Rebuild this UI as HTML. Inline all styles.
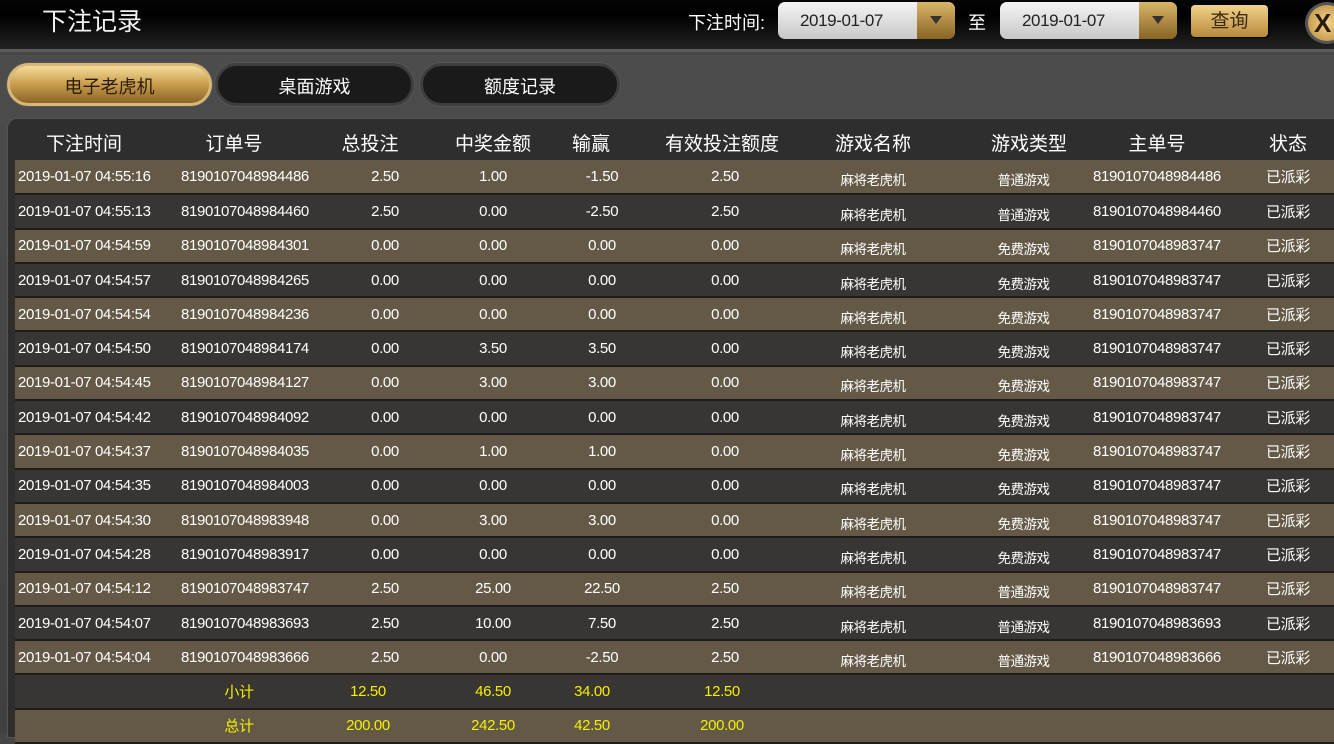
<!DOCTYPE html>
<html><head><meta charset="utf-8">
<style>
*{margin:0;padding:0;box-sizing:border-box}
body{width:1334px;height:733px;overflow:hidden;background:#464646;font-family:"Liberation Sans","Noto Sans CJK SC",sans-serif;color:#fff;position:relative}
.top{position:absolute;left:0;top:0;width:1334px;height:52px;background:linear-gradient(#050505,#000 30%,#222);border-bottom:3px solid #5a5a5a}
.title{position:absolute;left:42px;top:2px;font-size:25px;color:#f2f2f2}
.lbl{position:absolute;top:9px;font-size:18px}
.date{position:absolute;top:2px;width:177px;height:37px;border-radius:7px;background:linear-gradient(#f4f4f4,#c8c8c8);overflow:hidden;color:#222;font-size:17px;line-height:37px;padding-left:22px;letter-spacing:-0.4px}
.date i{position:absolute;right:0;top:0;width:38px;height:37px;background:linear-gradient(#d9b56a,#8a6424)}
.date i:after{content:"";position:absolute;left:13px;top:14px;border-left:6px solid transparent;border-right:6px solid transparent;border-top:8px solid #333}
.btn{position:absolute;left:1191px;top:5px;width:77px;height:32px;border-radius:4px;background:linear-gradient(#f2d38c,#b8893b);color:#3a2a10;font-size:19px;text-align:center;line-height:34px;box-shadow:1px 1px 1px #000}
.x{position:absolute;left:1305px;top:2px;width:44px;height:42px;border-radius:50%;background:radial-gradient(#f4d48c,#b8893b);border:3px solid #555;color:#2a1e0a;font-weight:bold;font-size:26px;line-height:36px;padding-left:6px}
.mid{position:absolute;left:0;top:55px;width:1334px;height:678px;background:linear-gradient(#4c4c4c,#404040)}
.tab{position:absolute;top:63px;height:43px;border-radius:22px;background:#1a1a1a;border:3px solid #3e3e3e;box-shadow:0 0 0 1px #555;text-align:center;line-height:42px;font-size:18px}
.tab.on{background:linear-gradient(#f5dc9a,#c89c4c 50%,#8a6428);color:#2a1c08;border-color:#d8b878}
.panel{position:absolute;left:7px;top:118px;width:1340px;height:620px;border-radius:10px 0 0 0;background:#2e2e2e;border:1px solid #555}
.hd{position:absolute;top:129px;font-size:19px;transform:translateX(-50%);white-space:nowrap}
table{position:absolute;left:15px;top:160px;border-collapse:collapse;table-layout:fixed;width:1340px}
td{height:34.3px;font-size:15px;letter-spacing:-0.35px;text-align:center;white-space:nowrap;border-bottom:2px solid #1f1d1b;padding:0;overflow:visible}
tr:nth-child(odd) td{background:#645946}
tr:nth-child(even) td{background:#393532}
td:first-child{text-align:left;padding-left:3px}
td.s{font-size:13.5px;padding-top:5px;letter-spacing:-0.5px}
tr.t td{color:#f4f000}
</style></head><body>
<div class="top"></div>
<div class="title">下注记录</div>
<div class="lbl" style="left:688px">下注时间:</div>
<div class="date" style="left:778px">2019-01-07<i></i></div>
<div class="lbl" style="left:968px">至</div>
<div class="date" style="left:1000px">2019-01-07<i></i></div>
<div class="btn">查询</div>
<div class="x">X</div>
<div class="mid"></div>
<div class="tab on" style="left:7px;width:205px">电子老虎机</div>
<div class="tab" style="left:215px;width:199px">桌面游戏</div>
<div class="tab" style="left:420px;width:200px">额度记录</div>
<div class="panel"></div>
<div class="hd" style="left:84px">下注时间</div>
<div class="hd" style="left:234px">订单号</div>
<div class="hd" style="left:370px">总投注</div>
<div class="hd" style="left:493px">中奖金额</div>
<div class="hd" style="left:591px">输赢</div>
<div class="hd" style="left:722px">有效投注额度</div>
<div class="hd" style="left:873px">游戏名称</div>
<div class="hd" style="left:1029px">游戏类型</div>
<div class="hd" style="left:1157px">主单号</div>
<div class="hd" style="left:1288px">状态</div>
<table>
<colgroup><col style="width:145px"><col style="width:170px"><col style="width:110px"><col style="width:106px"><col style="width:112px"><col style="width:134px"><col style="width:162px"><col style="width:139px"><col style="width:128px"><col style="width:134px"></colgroup>
<tr><td>2019-01-07 04:55:16</td><td>8190107048984486</td><td>2.50</td><td>1.00</td><td>-1.50</td><td>2.50</td><td class="s">麻将老虎机</td><td class="s">普通游戏</td><td>8190107048984486</td><td>已派彩</td></tr>
<tr><td>2019-01-07 04:55:13</td><td>8190107048984460</td><td>2.50</td><td>0.00</td><td>-2.50</td><td>2.50</td><td class="s">麻将老虎机</td><td class="s">普通游戏</td><td>8190107048984460</td><td>已派彩</td></tr>
<tr><td>2019-01-07 04:54:59</td><td>8190107048984301</td><td>0.00</td><td>0.00</td><td>0.00</td><td>0.00</td><td class="s">麻将老虎机</td><td class="s">免费游戏</td><td>8190107048983747</td><td>已派彩</td></tr>
<tr><td>2019-01-07 04:54:57</td><td>8190107048984265</td><td>0.00</td><td>0.00</td><td>0.00</td><td>0.00</td><td class="s">麻将老虎机</td><td class="s">免费游戏</td><td>8190107048983747</td><td>已派彩</td></tr>
<tr><td>2019-01-07 04:54:54</td><td>8190107048984236</td><td>0.00</td><td>0.00</td><td>0.00</td><td>0.00</td><td class="s">麻将老虎机</td><td class="s">免费游戏</td><td>8190107048983747</td><td>已派彩</td></tr>
<tr><td>2019-01-07 04:54:50</td><td>8190107048984174</td><td>0.00</td><td>3.50</td><td>3.50</td><td>0.00</td><td class="s">麻将老虎机</td><td class="s">免费游戏</td><td>8190107048983747</td><td>已派彩</td></tr>
<tr><td>2019-01-07 04:54:45</td><td>8190107048984127</td><td>0.00</td><td>3.00</td><td>3.00</td><td>0.00</td><td class="s">麻将老虎机</td><td class="s">免费游戏</td><td>8190107048983747</td><td>已派彩</td></tr>
<tr><td>2019-01-07 04:54:42</td><td>8190107048984092</td><td>0.00</td><td>0.00</td><td>0.00</td><td>0.00</td><td class="s">麻将老虎机</td><td class="s">免费游戏</td><td>8190107048983747</td><td>已派彩</td></tr>
<tr><td>2019-01-07 04:54:37</td><td>8190107048984035</td><td>0.00</td><td>1.00</td><td>1.00</td><td>0.00</td><td class="s">麻将老虎机</td><td class="s">免费游戏</td><td>8190107048983747</td><td>已派彩</td></tr>
<tr><td>2019-01-07 04:54:35</td><td>8190107048984003</td><td>0.00</td><td>0.00</td><td>0.00</td><td>0.00</td><td class="s">麻将老虎机</td><td class="s">免费游戏</td><td>8190107048983747</td><td>已派彩</td></tr>
<tr><td>2019-01-07 04:54:30</td><td>8190107048983948</td><td>0.00</td><td>3.00</td><td>3.00</td><td>0.00</td><td class="s">麻将老虎机</td><td class="s">免费游戏</td><td>8190107048983747</td><td>已派彩</td></tr>
<tr><td>2019-01-07 04:54:28</td><td>8190107048983917</td><td>0.00</td><td>0.00</td><td>0.00</td><td>0.00</td><td class="s">麻将老虎机</td><td class="s">免费游戏</td><td>8190107048983747</td><td>已派彩</td></tr>
<tr><td>2019-01-07 04:54:12</td><td>8190107048983747</td><td>2.50</td><td>25.00</td><td>22.50</td><td>2.50</td><td class="s">麻将老虎机</td><td class="s">普通游戏</td><td>8190107048983747</td><td>已派彩</td></tr>
<tr><td>2019-01-07 04:54:07</td><td>8190107048983693</td><td>2.50</td><td>10.00</td><td>7.50</td><td>2.50</td><td class="s">麻将老虎机</td><td class="s">普通游戏</td><td>8190107048983693</td><td>已派彩</td></tr>
<tr><td>2019-01-07 04:54:04</td><td>8190107048983666</td><td>2.50</td><td>0.00</td><td>-2.50</td><td>2.50</td><td class="s">麻将老虎机</td><td class="s">普通游戏</td><td>8190107048983666</td><td>已派彩</td></tr>
<tr class="t"><td></td><td style="padding-right:12px">小计</td><td style="padding-right:34px">12.50</td><td>46.50</td><td style="padding-right:20px">34.00</td><td style="padding-right:6px">12.50</td><td></td><td></td><td></td><td></td></tr>
<tr class="t"><td></td><td style="padding-right:12px">总计</td><td style="padding-right:34px">200.00</td><td>242.50</td><td style="padding-right:20px">42.50</td><td style="padding-right:6px">200.00</td><td></td><td></td><td></td><td></td></tr>
</table>
</body></html>
